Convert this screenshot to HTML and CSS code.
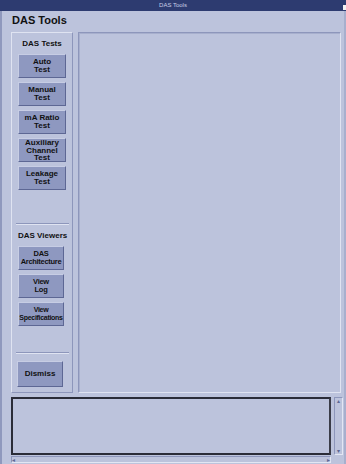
FILE: index.html
```html
<!DOCTYPE html>
<html lang="en">
<head>
  <meta charset="UTF-8" />
  <title>DAS Tools</title>
  <link rel="stylesheet" href="styles.css">
</head>
<body>

  <div class="titlebar">
    <span>DAS Tools</span>
    <i class="corner"></i>
  </div>

  <div class="window">
    <h1>DAS Tools</h1>

    <div class="main">
      <div class="sidebar">
        <p class="group-label center">DAS Tests</p>
        <div class="btn-list">
          <button class="btn">Auto<br>Test</button>
          <button class="btn">Manual<br>Test</button>
          <button class="btn">mA Ratio<br>Test</button>
          <button class="btn tight">Auxiliary<br>Channel<br>Test</button>
          <button class="btn">Leakage<br>Test</button>
        </div>

        <hr class="sep first">

        <p class="group-label">DAS Viewers</p>
        <div class="btn-list">
          <button class="btn narrow">DAS<br>Architecture</button>
          <button class="btn narrow">View<br>Log</button>
          <button class="btn narrow small">View<br>Specifications</button>
        </div>

        <hr class="sep second">

        <button class="btn dismiss">Dismiss</button>
      </div>

      <div class="canvas"></div>
    </div>

    <div class="console-row">
      <div class="console"></div>
      <div class="vscroll">
        <span class="arrow">&#9652;</span>
        <span class="arrow">&#9662;</span>
      </div>
    </div>
    <div class="hscroll">
      <span class="arrow">&#9666;</span>
      <span class="arrow">&#9656;</span>
    </div>
  </div>

</body>
</html>
```

FILE: styles.css
```css
* {
  margin: 0;
  padding: 0;
  box-sizing: border-box;
}
body {
  background: #bcc3dc;
  font-family: "Liberation Sans", Arial, sans-serif;
  color: #111;
  width: 346px;
  height: 464px;
  overflow: hidden;
}
.titlebar {
  height: 11px;
  background: #2d3b70;
  color: #c8cfe6;
  font-size: 6px;
  text-align: center;
  line-height: 11px;
  position: relative;
}
.titlebar .corner {
  position: absolute;
  right: 0;
  top: 5px;
  width: 3px;
  height: 5px;
  background: #f2f2f2;
}
.window {
  height: 453px;
  border-left: 2px solid #8f98bd;
  border-right: 2px solid #a7afcd;
  padding: 0 0 0 9px;
}
h1 {
  font-size: 11px;
  font-weight: bold;
  height: 21px;
  line-height: 19px;
  padding-left: 1px;
}
.main {
  display: flex;
  height: 361px;
  gap: 5px;
  padding-right: 3px;
}
.sidebar {
  width: 62px;
  border: 1px solid;
  border-color: #dfe3f1 #8d96bb #8d96bb #dfe3f1;
  display: flex;
  flex-direction: column;
  padding: 0 0 0 6px;
}
.group-label {
  font-size: 8px;
  font-weight: bold;
  line-height: 10px;
  margin-top: 6px;
  margin-bottom: 5px;
}
.group-label.center {
  text-align: center;
  padding-right: 6px;
}
.btn-list {
  display: flex;
  flex-direction: column;
  gap: 4px;
}
.btn {
  width: 48px;
  height: 24px;
  padding: 0;
  background: #8e98c0;
  border: 1px solid;
  border-color: #c7cde4 #5d6794 #5d6794 #c7cde4;
  font-family: "Liberation Sans", Arial, sans-serif;
  font-size: 8px;
  font-weight: bold;
  line-height: 8px;
  color: #111;
  text-align: center;
}
.btn.tight {
  line-height: 7.5px;
}
.btn.narrow {
  width: 46px;
  font-size: 7.5px;
  letter-spacing: -0.3px;
  white-space: nowrap;
}
.btn.small {
  font-size: 7px;
}
.sep {
  border: none;
  border-top: 1px solid #8d96bb;
  border-bottom: 1px solid #dfe3f1;
  width: 53px;
  margin-left: -2px;
}
.sep.first {
  margin-top: 33px;
}
.sep.second {
  margin-top: 26px;
}
.dismiss {
  width: 46px;
  height: 26px;
  margin-top: 7px;
  margin-left: -1px;
}
.canvas {
  flex: 1;
  border: 1px solid;
  border-color: #8d96bb #dfe3f1 #dfe3f1 #8d96bb;
  box-shadow: inset 1px 1px 0 #a7afcd;
}
.console-row {
  display: flex;
  margin-top: 4px;
  height: 58px;
  gap: 3px;
}
.console {
  width: 320px;
  border: 2px solid #2a2c38;
  border-right-color: #3a3c48;
  background: #bcc3dc;
}
.vscroll {
  width: 9px;
  border: 1px solid;
  border-color: #8d96bb #e2e6f3 #e2e6f3 #8d96bb;
  display: flex;
  flex-direction: column;
  justify-content: space-between;
  align-items: center;
}
.hscroll {
  width: 320px;
  height: 7px;
  margin-top: 1px;
  border: 1px solid;
  border-color: #8d96bb #e2e6f3 #e2e6f3 #8d96bb;
  display: flex;
  justify-content: space-between;
  align-items: center;
}
.arrow {
  font-size: 6px;
  line-height: 6px;
  color: #5d6794;
}
```
